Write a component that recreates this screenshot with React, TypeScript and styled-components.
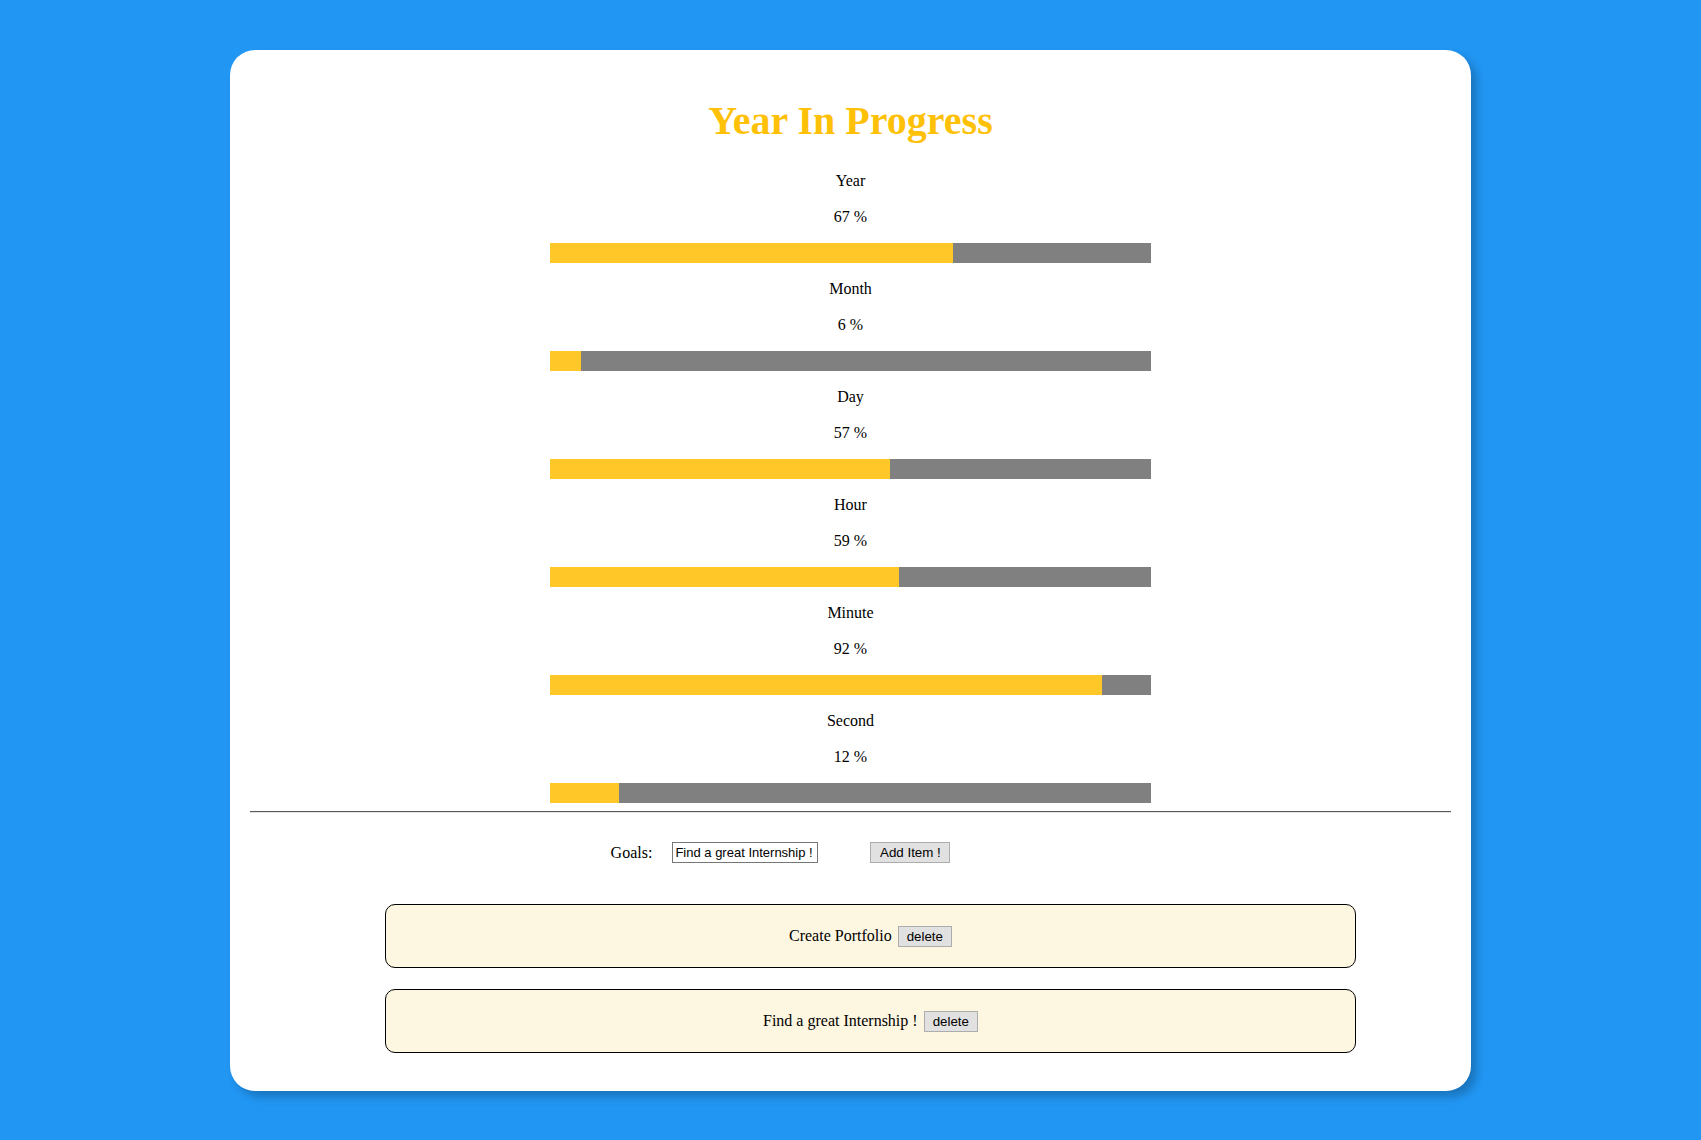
import React from "react";
import styled, { createGlobalStyle } from "styled-components";

const GlobalStyle = createGlobalStyle`
  html, body {
    margin: 0;
    padding: 0;
    background: #2196f3;
  }
  body {
    font-family: "Liberation Serif", "Times New Roman", serif;
    font-size: 16px;
    color: #000;
  }
  * { box-sizing: content-box; }
`;

const Page = styled.div`
  padding: 50px 0 40px;
`;

const Card = styled.main`
  width: 1201px;
  margin: 0 auto;
  padding: 20px 20px 20px;
  background: #ffffff;
  border-radius: 25px;
  box-shadow: 6px 6px 8px rgba(0, 0, 0, 0.22);
`;

const Title = styled.h1`
  margin: 27px 0 27px;
  text-align: center;
  font-family: "Liberation Serif", "Times New Roman", serif;
  font-size: 40px;
  font-weight: bold;
  line-height: normal;
  color: #ffc107;
`;

const Item = styled.section`
  text-align: center;
`;

const Label = styled.p`
  margin: 0 0 16px;
  line-height: 20px;
`;

const Track = styled.div<{ $last?: boolean }>`
  width: 601px;
  height: 20px;
  margin: 0 auto ${(p) => (p.$last ? "8px" : "16px")};
  background: #808080;
  display: flex;
`;

const Fill = styled.div`
  height: 100%;
  background: #ffc828;
`;

const Rule = styled.hr`
  margin: 0;
  border: 0;
  border-top: 1px solid #5a5a5a;
  border-bottom: 1px solid #e2e2e2;
  height: 0;
`;

const GoalForm = styled.form`
  display: flex;
  justify-content: center;
  align-items: center;
  margin-top: 29px;
  padding-right: 140px;
`;

const GoalLabel = styled.label`
  font-size: 16px;
  margin-right: 20px;
`;

const GoalInput = styled.input`
  box-sizing: border-box;
  width: 146px;
  height: 21px;
  padding: 1px 2px;
  border: 1px solid #767676;
  font-family: "Liberation Sans", Arial, sans-serif;
  font-size: 13px;
  color: #000;
  margin: 0 52px 0 0;
  outline: none;
`;

const Button = styled.button<{ $w?: number }>`
  box-sizing: border-box;
  height: 21px;
  ${(p) => (p.$w ? `width: ${p.$w}px;` : "")}
  padding: 0 8px;
  margin: 0;
  border: 1px solid #adadad;
  background: #e1e1e1;
  font-family: "Liberation Sans", Arial, sans-serif;
  font-size: 13.333px;
  color: #000;
  cursor: pointer;
`;

const GoalList = styled.ul`
  list-style: none;
  margin: 41px 0 18px;
  padding: 0 0 0 40px;
  display: flex;
  flex-direction: column;
  align-items: center;
  gap: 21px;
`;

const GoalItem = styled.li`
  width: 80%;
  height: 62px;
  padding: 0 20px;
  border: 1px solid #000;
  border-radius: 10px;
  background: #fdf6e1;
  display: flex;
  justify-content: center;
  align-items: center;
  gap: 6px;
  font-size: 16px;
`;

const bars = [
  { name: "Year", shown: 67, exact: 67.0 },
  { name: "Month", shown: 6, exact: 5.2 },
  { name: "Day", shown: 57, exact: 56.5 },
  { name: "Hour", shown: 59, exact: 58.1 },
  { name: "Minute", shown: 92, exact: 91.9 },
  { name: "Second", shown: 12, exact: 11.5 },
];

const goals = ["Create Portfolio", "Find a great Internship !"];

export default function App() {
  return (
    <>
      <GlobalStyle />
      <Page>
        <Card>
          <Title>Year In Progress</Title>
          {bars.map((b, i) => (
            <Item key={b.name}>
              <Label>{b.name}</Label>
              <Label>{b.shown} %</Label>
              <Track $last={i === bars.length - 1}>
                <Fill style={{ width: `${b.exact}%` }} />
              </Track>
            </Item>
          ))}
          <Rule />
          <GoalForm onSubmit={(e) => e.preventDefault()}>
            <GoalLabel htmlFor="goal">Goals:</GoalLabel>
            <GoalInput id="goal" defaultValue="Find a great Internship !" />
            <Button type="submit" $w={80}>Add Item !</Button>
          </GoalForm>
          <GoalList>
            {goals.map((g) => (
              <GoalItem key={g}>
                <span>{g}</span>
                <Button type="button">delete</Button>
              </GoalItem>
            ))}
          </GoalList>
        </Card>
      </Page>
    </>
  );
}
